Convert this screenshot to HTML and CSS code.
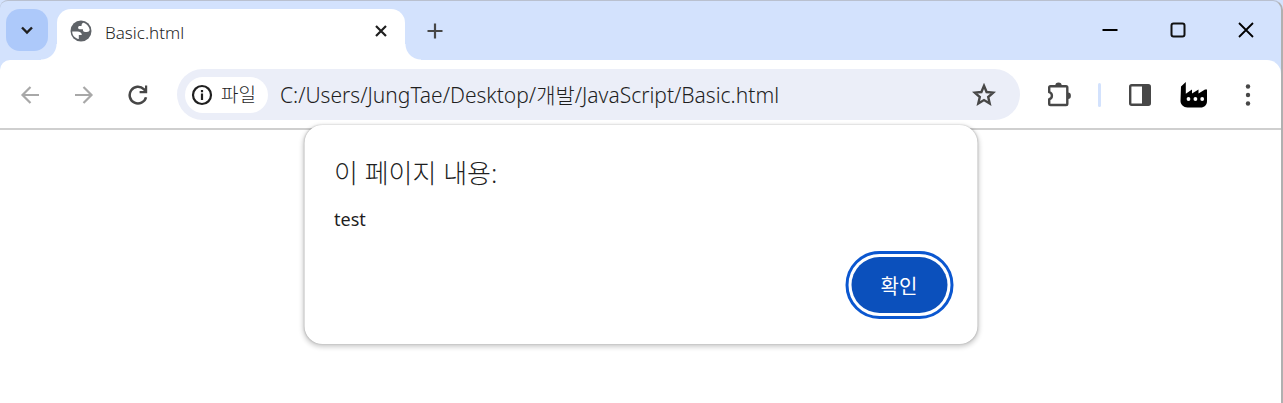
FILE: index.html
```html
<!DOCTYPE html>
<html lang="ko">
<head>
  <meta charset="UTF-8">
  <meta name="viewport" content="width=device-width, initial-scale=1.0">
  <title>Basic.html</title>
  <link rel="stylesheet" href="styles.css">
</head>
<body>
  <div class="window">
    <!-- 탭 표시줄 -->
    <header class="tab-strip">
      <button class="tab-search" aria-label="탭 검색">
        <svg width="14" height="14" viewBox="0 0 14 14"><path d="M2 4.500l5 5 5-5" fill="none" stroke="#1f1f1f" stroke-width="2.400"/></svg>
      </button>
      <div class="tab">
        <svg class="favicon" width="22" height="22" viewBox="0 0 22 22">
          <circle cx="11" cy="11" r="10.500" fill="#5f6368"/>
          <path d="M2.200 11.500h5.300c2.500 0 4.300 1.400 4.300 3.400h-3v4.200C4.800 18.300 2.200 15.400 2.200 11.500z" fill="#fff"/>
          <path d="M13.800 2.700c3.400 1.200 5.500 4.100 5.900 7.300-.3 1.300-1.300 2-2.900 2h-1.600c-1.800 0-2.300-1-2.300-2.800H9.600c-.9 0-1.500-.7-1.500-1.600 0-1 .6-1.600 1.600-1.600h1.800c0-2 .7-3 2.300-3.300z" fill="#fff"/>
        </svg>
        <span class="tab-title">Basic.html</span>
        <button class="tab-close" aria-label="탭 닫기">
          <svg width="14" height="14" viewBox="0 0 14 14"><path d="M2 2l10 10M12 2L2 12" stroke="#1f1f1f" stroke-width="2.200"/></svg>
        </button>
      </div>
      <button class="icon-btn new-tab" aria-label="새 탭">
        <svg width="16" height="16" viewBox="0 0 16 16"><path d="M8 .5v15M.5 8h15" stroke="#474747" stroke-width="2.200"/></svg>
      </button>
      <div class="window-controls">
        <button aria-label="최소화">
          <svg width="16" height="16" viewBox="0 0 16 16"><path d="M.5 8h15" stroke="#000" stroke-width="2"/></svg>
        </button>
        <button aria-label="최대화">
          <svg width="16" height="16" viewBox="0 0 16 16"><rect x="1.500" y="1.500" width="13" height="13" rx="2" fill="none" stroke="#111" stroke-width="2"/></svg>
        </button>
        <button aria-label="닫기">
          <svg width="16" height="16" viewBox="0 0 16 16"><path d="M1 1l14 14M15 1L1 15" stroke="#000" stroke-width="1.800"/></svg>
        </button>
      </div>
    </header>

    <!-- 도구 모음 -->
    <nav class="toolbar">
      <button class="icon-btn" aria-label="뒤로">
        <svg width="20" height="20" viewBox="0 0 20 20"><path d="M19 10H3M10.500 2L2.500 10l8 8" fill="none" stroke="#a8a8a8" stroke-width="2.200"/></svg>
      </button>
      <button class="icon-btn" aria-label="앞으로">
        <svg width="20" height="20" viewBox="0 0 20 20"><path d="M1 10h16M9.500 2l8 8-8 8" fill="none" stroke="#a8a8a8" stroke-width="2.200"/></svg>
      </button>
      <button class="icon-btn" aria-label="새로고침">
        <svg width="20" height="20" viewBox="0 0 20 20"><path d="M18 12.200A8.300 8.300 0 1 1 15.800 4.200L18 6.400" fill="none" stroke="#474747" stroke-width="2.500"/><path d="M19.200.6v7.600h-7.600V6H17V.6z" fill="#474747"/></svg>
      </button>
      <div class="omnibox">
        <button class="file-chip">
          <svg width="22" height="22" viewBox="0 0 22 22"><circle cx="11" cy="11" r="9" fill="none" stroke="#1f1f1f" stroke-width="2.200"/><path d="M11 9.600V16M11 6v2.200" stroke="#1f1f1f" stroke-width="2.200"/></svg>
          <span>파일</span>
        </button>
        <input class="url" type="text" aria-label="주소창" spellcheck="false" value="C:/Users/JungTae/Desktop/개발/JavaScript/Basic.html">
        <button class="icon-btn" aria-label="북마크">
          <svg width="24" height="24" viewBox="0 0 24 24"><path d="M12 2.800l2.600 6.200 6.700.6-5.100 4.400 1.500 6.600L12 17.100l-5.700 3.500L7.800 14 2.700 9.600l6.700-.6z" fill="none" stroke="#474747" stroke-width="2.400"/></svg>
        </button>
      </div>
      <button class="icon-btn" aria-label="확장 프로그램">
        <svg width="26" height="26" viewBox="0 0 26 26"><path d="M4.500 4.200H20q1.300 0 1.300 1.300v16.200q0 1.300-1.300 1.300H4.500q-1.300 0-1.300-1.300v-4.500c1.800-.5 2.700-1.800 2.700-3.500S5 10.700 3.200 10.200V5.500q0-1.300 1.300-1.300z" fill="none" stroke="#474747" stroke-width="2.400" stroke-linejoin="round"/><path d="M9.300 3.700a3.200 3.300 0 0 1 6.400 0zM22 10.500a2.900 3.200 0 0 1 0 6.400z" fill="#474747"/></svg>
      </button>
      <span class="divider"></span>
      <button class="icon-btn" aria-label="측면 패널">
        <svg width="22" height="22" viewBox="0 0 22 22"><rect x="1.200" y="1.200" width="19.600" height="19.600" rx="1.500" fill="none" stroke="#474747" stroke-width="2.400"/><path d="M13 1h8v20h-8z" fill="#474747"/></svg>
      </button>
      <button class="icon-btn" aria-label="프로필">
        <svg width="28" height="28" viewBox="0 0 28 28"><path d="M1 5.500L5.800 1v11.700L12 8.500v4l6.500-4v4l6.500-4h2V20c0 4-2.500 6.500-6.500 6.500h-13C3.500 26.500.5 23.500.5 20z" fill="#000"/><g fill="#fff"><circle cx="8.500" cy="18" r="1.900"/><circle cx="15.400" cy="18" r="1.900"/><circle cx="22.200" cy="18" r="1.900"/></g></svg>
      </button>
      <button class="icon-btn" aria-label="메뉴">
        <svg width="22" height="22" viewBox="0 0 22 22" fill="#474747"><circle cx="11" cy="2.500" r="2.200"/><circle cx="11" cy="11" r="2.200"/><circle cx="11" cy="19.500" r="2.200"/></svg>
      </button>
    </nav>

    <main class="page">
      <!-- 알림창 -->
      <dialog class="alert" open aria-labelledby="alert-title">
        <h1 class="alert-title" id="alert-title">이 페이지 내용:</h1>
        <p class="alert-message">test</p>
        <form class="alert-actions" method="dialog">
          <button class="ok-btn">확인</button>
        </form>
      </dialog>
    </main>
  </div>
</body>
</html>
```
FILE: styles.css
```css
* {
  margin: 0;
  padding: 0;
  box-sizing: border-box;
}

body {
  font-family: 'Noto Sans', 'Noto Sans CJK KR', sans-serif;
  background: #d3e2fd;
  color: #1f1f1f;
}

button {
  border: none;
  background: none;
  font-family: inherit;
  color: inherit;
  cursor: pointer;
}

svg {
  display: block;
  flex: none;
}

.window {
  display: flex;
  flex-direction: column;
  min-height: 100vh;
  border-top: 1px solid #b9c0cf;
  border-right: 2px solid #b0b0b0;
  border-radius: 8px 10px 0 0;
}

/* 탭 표시줄 */
.tab-strip {
  display: flex;
  align-items: flex-end;
  padding: 8px 1px 0 6px;
}

.tab-search {
  display: flex;
  align-items: center;
  justify-content: center;
  width: 42px;
  height: 42px;
  margin: 0 9px 9px 0;
  border-radius: 14px;
  background: #adc9fa;
}

.tab {
  position: relative;
  display: flex;
  align-items: center;
  width: 348px;
  height: 51px;
  padding: 0 12px 8px 13px;
  border-radius: 14px 14px 0 0;
  background: #fff;
}

.tab::before,
.tab::after {
  content: '';
  position: absolute;
  bottom: 0;
  width: 16px;
  height: 16px;
}

.tab::before {
  right: 100%;
  background: radial-gradient(circle at 0 0, transparent 15px, #fff 16px);
}

.tab::after {
  left: 100%;
  background: radial-gradient(circle at 100% 0, transparent 15px, #fff 16px);
}

.tab-title {
  flex: 1;
  padding-top: 4px;
  margin-left: 13px;
  font-size: 17px;
  font-weight: 300;
  line-height: 24px;
}

.tab-close {
  display: flex;
  align-items: center;
  justify-content: center;
  width: 24px;
  height: 24px;
}

.icon-btn {
  display: flex;
  align-items: center;
  justify-content: center;
  flex: none;
  width: 40px;
  height: 40px;
}

.new-tab {
  margin: 0 0 9px 10px;
}

.window-controls {
  display: flex;
  align-self: flex-start;
  margin-left: auto;
}

.window-controls button {
  display: flex;
  align-items: center;
  justify-content: center;
  width: 68px;
  height: 42px;
}

/* 도구 모음 */
.toolbar {
  display: flex;
  align-items: center;
  gap: 14px;
  padding: 9px 13px 8px 10px;
  border-bottom: 2px solid #cfcfcf;
  border-radius: 10px 14px 0 0;
  background: #fff;
}

.omnibox {
  display: flex;
  align-items: center;
  flex: 1;
  height: 51px;
  margin: 0 5px;
  padding: 0 16px 0 8px;
  border-radius: 26px;
  background: #ebeef8;
}

.file-chip {
  display: flex;
  align-items: center;
  gap: 8px;
  height: 36px;
  padding: 0 12px 0 6px;
  border-radius: 18px;
  background: #fff;
  font-size: 19px;
  font-weight: 300;
  line-height: 24px;
}

.url {
  flex: 1;
  min-width: 0;
  margin-left: 12px;
  border: none;
  outline: none;
  background: none;
  color: inherit;
  font-family: inherit;
  font-size: 21px;
  font-weight: 300;
  line-height: 28px;
}

.divider {
  width: 3px;
  height: 24px;
  margin: 0 5px;
  border-radius: 2px;
  background: #d3e2fd;
}

/* 페이지 영역 */
.page {
  position: relative;
  flex: 1;
  background: #fff;
}

/* 알림창은 도구 모음 위로 살짝 겹친다 */
.alert {
  position: absolute;
  top: -5px;
  left: 50%;
  width: 673px;
  max-width: 100%;
  padding: 32px 30px 31px;
  transform: translateX(-50%);
  border: none;
  border-radius: 18px;
  background: #fff;
  color: inherit;
  box-shadow: 0 0 2px rgba(0, 0, 0, 0.2), 0 2px 5px 1px rgba(0, 0, 0, 0.2);
}

.alert-title {
  font-size: 26px;
  font-weight: 300;
  line-height: 32px;
}

.alert-message {
  margin-top: 16px;
  font-size: 18px;
  line-height: 28px;
}

.alert-actions {
  display: flex;
  justify-content: flex-end;
  margin-top: 24px;
}

.ok-btn {
  min-width: 96px;
  height: 56px;
  border-radius: 28px;
  outline: 3px solid #0b57d0;
  outline-offset: 3px;
  background: #0b50bc;
  color: #fff;
  font-size: 20px;
}
```
